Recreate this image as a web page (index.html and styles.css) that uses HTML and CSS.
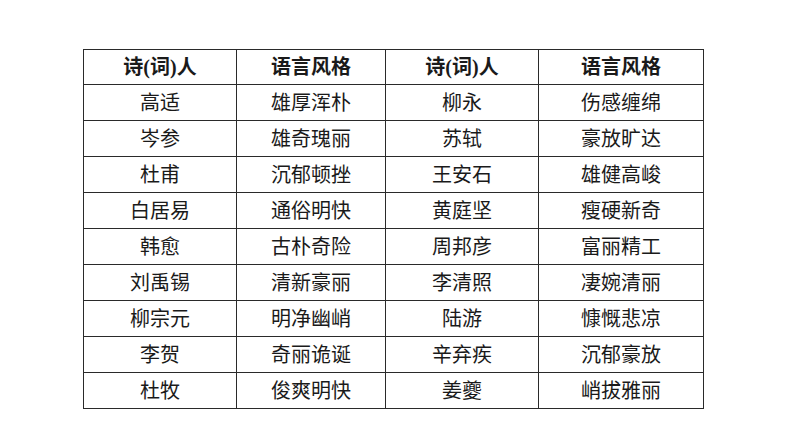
FILE: index.html
```html
<!DOCTYPE html>
<html lang="zh">
<head>
<meta charset="utf-8">
<link rel="stylesheet" href="styles.css">
</head>
<body>
<div class="page">
<table class="poets">
<colgroup>
<col class="c1"><col class="c2"><col class="c3"><col class="c4">
</colgroup>
<thead>
<tr><th>诗(词)人</th><th>语言风格</th><th>诗(词)人</th><th>语言风格</th></tr>
</thead>
<tbody>
<tr><td>高适</td><td>雄厚浑朴</td><td>柳永</td><td>伤感缠绵</td></tr>
<tr><td>岑参</td><td>雄奇瑰丽</td><td>苏轼</td><td>豪放旷达</td></tr>
<tr><td>杜甫</td><td>沉郁顿挫</td><td>王安石</td><td>雄健高峻</td></tr>
<tr><td>白居易</td><td>通俗明快</td><td>黄庭坚</td><td>瘦硬新奇</td></tr>
<tr><td>韩愈</td><td>古朴奇险</td><td>周邦彦</td><td>富丽精工</td></tr>
<tr><td>刘禹锡</td><td>清新豪丽</td><td>李清照</td><td>凄婉清丽</td></tr>
<tr><td>柳宗元</td><td>明净幽峭</td><td>陆游</td><td>慷慨悲凉</td></tr>
<tr><td>李贺</td><td>奇丽诡诞</td><td>辛弃疾</td><td>沉郁豪放</td></tr>
<tr><td>杜牧</td><td>俊爽明快</td><td>姜夔</td><td>峭拔雅丽</td></tr>
</tbody>
</table>
</div>
</body>
</html>
```
FILE: styles.css
```css
html, body {
  margin: 0;
  padding: 0;
  background: #ffffff;
}
.page {
  width: 794px;
  height: 447px;
  padding: 49px 0 0 83px;
  box-sizing: border-box;
}
.poets {
  border-collapse: collapse;
  table-layout: fixed;
  width: 620px;
  font-family: "Liberation Serif", "Noto Sans CJK SC", sans-serif;
  font-size: 20px;
  color: #1a1a1a;
}
.c1 { width: 153px; }
.c2 { width: 149px; }
.c3 { width: 153px; }
.c4 { width: 165px; }
.poets th,
.poets td {
  border: 1px solid #2a2a2a;
  text-align: center;
  padding: 0;
  line-height: 20px;
}
.poets th {
  height: 34px;
  font-weight: bold;
}
.poets td {
  height: 35px;
  font-weight: normal;
}
```
